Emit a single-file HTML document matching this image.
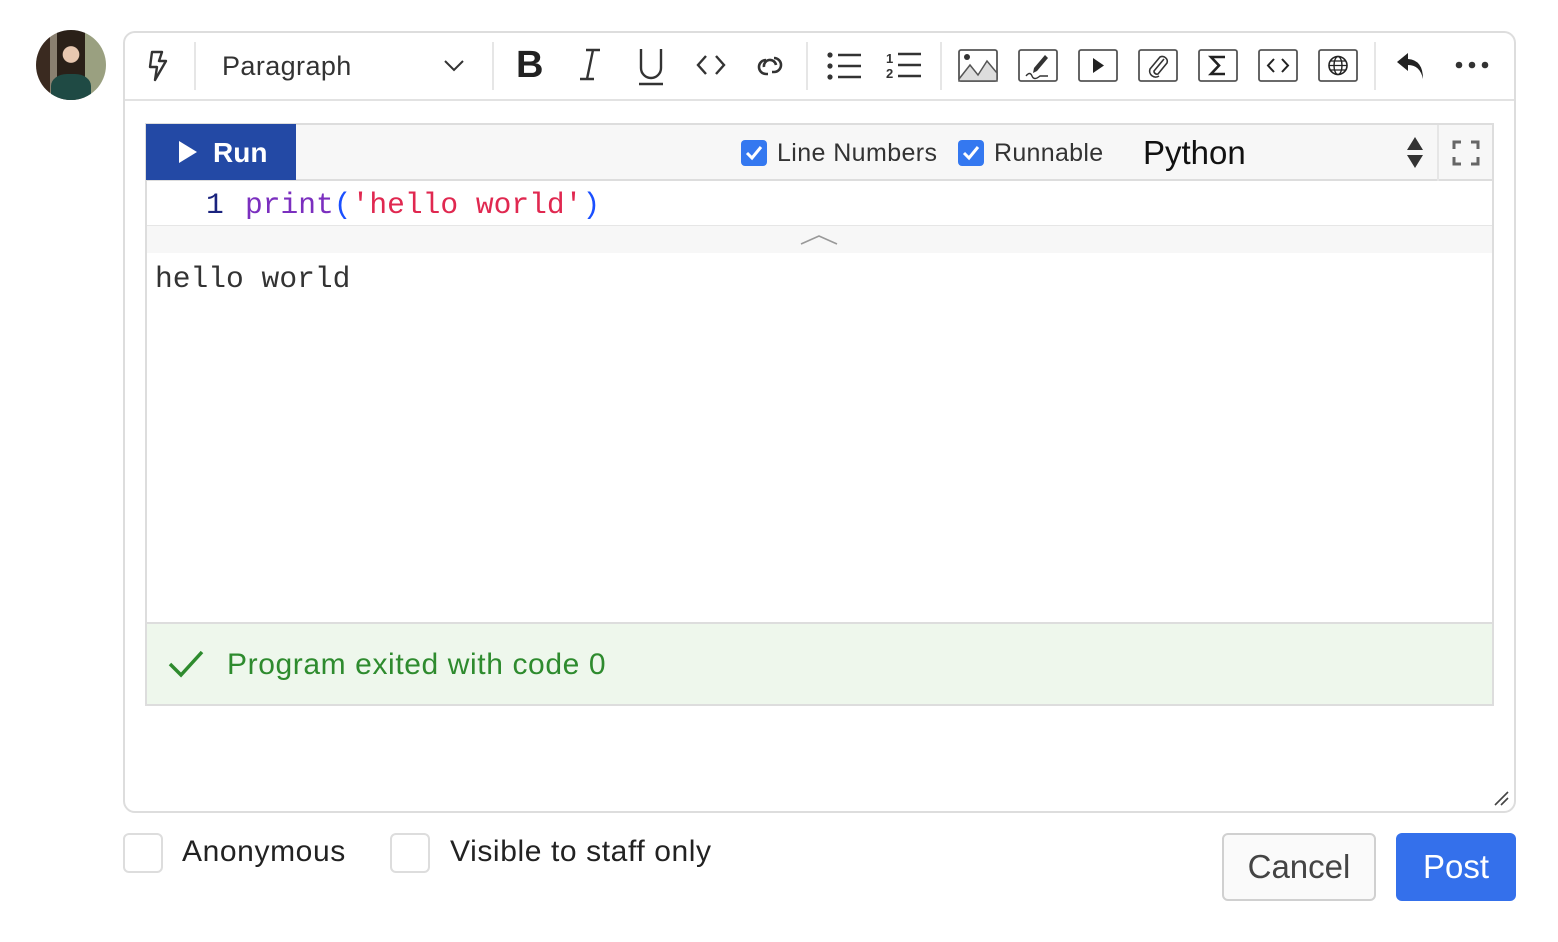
<!DOCTYPE html>
<html><head><meta charset="utf-8">
<style>
*{box-sizing:border-box;margin:0;padding:0}
body{width:1558px;height:942px;background:#fff;font-family:"Liberation Sans",sans-serif;position:relative;overflow:hidden;color:#333}
.abs{position:absolute}
.avatar{left:36px;top:30px;width:70px;height:70px;border-radius:50%;background:radial-gradient(circle at 50% 35%,#e8c8b0 0 14%,transparent 15%),linear-gradient(90deg,#3a2a20 0 20%,#8a8070 20% 30%,#2a2018 30% 70%,#9aa080 70%);overflow:hidden}
.avatar:after{content:"";position:absolute;left:15px;top:44px;width:40px;height:30px;border-radius:40% 40% 0 0;background:#1f4a44}
.editor{left:123px;top:31px;width:1393px;height:782px;border:2px solid #ddd;border-radius:12px}
.tb{left:125px;top:33px;width:1389px;height:68px;border-bottom:2px solid #e2e2e2}
.sep{top:42px;width:2px;height:48px;background:#e6e6e6}
svg{position:absolute;overflow:visible}
.cb{left:145px;top:123px;width:1349px;height:583px;border:2px solid #ddd}
.hdr{left:147px;top:125px;width:1345px;height:56px;background:#f7f7f7;border-bottom:2px solid #ddd}
.run{left:146px;top:124px;width:150px;height:56px;background:#2349a5;color:#fff;font-weight:bold;font-size:28px}
.chk{width:26px;height:26px;background:#3478f0;border-radius:4px}
.mono{font-family:"Liberation Mono",monospace;font-size:29.6px}
.box{width:40px;height:40px;border:2px solid #ddd;border-radius:6px}
</style></head><body>
<div class="abs avatar"></div>
<div class="abs editor"></div>
<div class="abs tb"></div>
<svg style="left:146px;top:50px" width="24" height="32" viewBox="0 0 24 32"><path d="M6 2 L16 2 L13 11 L20 11 L9 30 L11 17 L4 17 Z" fill="none" stroke="#333" stroke-width="2.4" stroke-linejoin="round"/></svg>
<div class="abs sep" style="left:194px"></div>
<div class="abs" style="left:222px;top:51px;font-size:27px;color:#333;letter-spacing:0.4px">Paragraph</div>
<svg style="left:444px;top:60px" width="20" height="12"><path d="M1 1 L10 10 L19 1" fill="none" stroke="#333" stroke-width="2"/></svg>
<div class="abs sep" style="left:492px"></div>
<div class="abs" style="left:516px;top:44px;font-size:38px;font-weight:bold;color:#222">B</div>
<svg style="left:578px;top:48px" width="24" height="34"><path d="M8 2 H22 M2 31 H16 M15 2 L9 31" fill="none" stroke="#333" stroke-width="2.4"/></svg>
<svg style="left:638px;top:48px" width="26" height="38"><path d="M3 1 V20 A10 10 0 0 0 23 20 V1 M1 36 H25" fill="none" stroke="#333" stroke-width="2.4"/></svg>
<svg style="left:696px;top:55px" width="30" height="20"><path d="M10 1 L2 10 L10 19 M20 1 L28 10 L20 19" fill="none" stroke="#333" stroke-width="2.4"/></svg>
<svg style="left:752px;top:54px" width="36" height="24"><path d="M14 6 A7 7 0 1 0 14 20 H16 M22 4 A7 7 0 1 1 22 18 H20 M12 13 A6 6 0 0 1 24 11" fill="none" stroke="#333" stroke-width="2.6"/></svg>
<div class="abs sep" style="left:806px"></div>
<svg style="left:826px;top:52px" width="36" height="28"><circle cx="4" cy="3" r="2.6" fill="#333"/><circle cx="4" cy="14" r="2.6" fill="#333"/><circle cx="4" cy="25" r="2.6" fill="#333"/><path d="M12 3 H35 M12 14 H35 M12 25 H35" stroke="#333" stroke-width="2.4"/></svg>
<svg style="left:886px;top:50px" width="36" height="30"><text x="0" y="13" font-size="13" font-weight="bold" fill="#333" font-family="Liberation Sans">1</text><text x="0" y="28" font-size="13" font-weight="bold" fill="#333" font-family="Liberation Sans">2</text><path d="M12 4 H35 M12 15 H35 M12 26 H35" stroke="#333" stroke-width="2.4"/></svg>
<div class="abs sep" style="left:940px"></div>
<svg style="left:958px;top:49px" width="40" height="33"><rect x="1" y="1" width="38" height="31" rx="2" fill="#fff" stroke="#555" stroke-width="1.8"/><path d="M1 30 L12 16 L20 26 L29 12 L39 24 V32 H1Z" fill="#ddd" stroke="#555" stroke-width="1.5"/><circle cx="9" cy="8" r="3" fill="#333"/></svg>
<svg style="left:1018px;top:49px" width="40" height="33"><rect x="1" y="1" width="38" height="31" rx="2" fill="#fff" stroke="#555" stroke-width="1.8"/><path d="M27 6 L30 9 L19 22 L15 24 L16 19 Z" fill="#333"/><path d="M8 27 Q12 22 14 27 T22 27 H30" fill="none" stroke="#333" stroke-width="1.4"/></svg>
<svg style="left:1078px;top:49px" width="40" height="33"><rect x="1" y="1" width="38" height="31" rx="2" fill="#fff" stroke="#555" stroke-width="1.8"/><path d="M15 9 L26 16.5 L15 24 Z" fill="#222"/></svg>
<svg style="left:1138px;top:49px" width="40" height="33"><rect x="1" y="1" width="38" height="31" rx="2" fill="#fff" stroke="#555" stroke-width="1.8"/><path d="M26 10 L16 22 A3 3 0 0 0 20 25 L29 14 A5 5 0 0 0 22 8 L12 20 A6 6 0 0 0 21 27" fill="none" stroke="#333" stroke-width="1.6"/></svg>
<svg style="left:1198px;top:49px" width="40" height="33"><rect x="1" y="1" width="38" height="31" rx="2" fill="#fff" stroke="#555" stroke-width="1.8"/><path d="M27 8 H13 L21 16.5 L13 25 H27" fill="none" stroke="#222" stroke-width="2.6"/></svg>
<svg style="left:1258px;top:49px" width="40" height="33"><rect x="1" y="1" width="38" height="31" rx="2" fill="#fff" stroke="#555" stroke-width="1.8"/><path d="M16 10 L10 16.5 L16 23 M24 10 L30 16.5 L24 23" fill="none" stroke="#222" stroke-width="2"/></svg>
<svg style="left:1318px;top:49px" width="40" height="33"><rect x="1" y="1" width="38" height="31" rx="2" fill="#fff" stroke="#555" stroke-width="1.8"/><circle cx="20" cy="16.5" r="9" fill="none" stroke="#222" stroke-width="1.6"/><ellipse cx="20" cy="16.5" rx="4" ry="9" fill="none" stroke="#222" stroke-width="1.4"/><path d="M11 16.5 H29 M12.5 12 H27.5 M12.5 21 H27.5" stroke="#222" stroke-width="1.3"/></svg>
<div class="abs sep" style="left:1374px"></div>
<svg style="left:1396px;top:52px" width="30" height="28"><path d="M12 1 L1 10 L12 19 V13 Q24 13 27 27 Q27 8 12 7 Z" fill="#222"/></svg>
<svg style="left:1455px;top:60px" width="36" height="10"><circle cx="4" cy="5" r="3.3" fill="#333"/><circle cx="17" cy="5" r="3.3" fill="#333"/><circle cx="30" cy="5" r="3.3" fill="#333"/></svg>

<div class="abs cb"></div>
<div class="abs hdr"></div>
<div class="abs run"><svg style="left:33px;top:17px" width="18" height="22"><path d="M0 0 L18 11 L0 22Z" fill="#fff"/></svg><span class="abs" style="left:67px;top:13px">Run</span></div>
<div class="abs chk" style="left:741px;top:140px"><svg style="left:4px;top:5px" width="18" height="16"><path d="M2 8 L7 13 L16 2" fill="none" stroke="#fff" stroke-width="3"/></svg></div>
<div class="abs" style="left:777px;top:139px;font-size:25px;color:#333;letter-spacing:0.4px">Line Numbers</div>
<div class="abs chk" style="left:958px;top:140px"><svg style="left:4px;top:5px" width="18" height="16"><path d="M2 8 L7 13 L16 2" fill="none" stroke="#fff" stroke-width="3"/></svg></div>
<div class="abs" style="left:994px;top:139px;font-size:25px;color:#333;letter-spacing:0.3px">Runnable</div>
<div class="abs" style="left:1143px;top:134px;font-size:33px;color:#111">Python</div>
<svg style="left:1406px;top:137px" width="18" height="32"><path d="M9 0 L17 13 H1Z M1 18 H17 L9 31Z" fill="#333"/></svg>
<div class="abs" style="left:1437px;top:125px;width:2px;height:56px;background:#e6e6e6"></div>
<svg style="left:1453px;top:141px" width="26" height="24"><path d="M1 8 V1 H8 M18 1 H25 V8 M25 16 V23 H18 M8 23 H1 V16" fill="none" stroke="#666" stroke-width="3"/></svg>
<div class="abs mono" style="left:206px;top:188px;color:#1a237e">1</div>
<div class="abs mono" style="left:245px;top:188px"><span style="color:#7b2fbf">print</span><span style="color:#1a4fff">(</span><span style="color:#e02850">'hello world'</span><span style="color:#1a4fff">)</span></div>
<div class="abs" style="left:147px;top:225px;width:1345px;height:28px;background:#f7f7f7;border-top:1px solid #e6e6e6"></div>
<svg style="left:800px;top:234px" width="38" height="12"><path d="M1 10 L19 2 L37 10" fill="none" stroke="#999" stroke-width="1.6"/></svg>
<div class="abs mono" style="left:155px;top:262px;color:#333">hello world</div>
<div class="abs" style="left:147px;top:622px;width:1345px;height:82px;background:#eef7ec;border-top:2px solid #ddd"></div>
<svg style="left:168px;top:650px" width="36" height="28"><path d="M2 14 L13 25 L34 2" fill="none" stroke="#2e8b2e" stroke-width="3.5"/></svg>
<div class="abs" style="left:227px;top:648px;font-size:30px;color:#2e8b2e;letter-spacing:0.6px">Program exited with code 0</div>
<svg style="left:1494px;top:792px" width="16" height="14"><path d="M1 13 L14 0 M7 13 L14 6" stroke="#444" stroke-width="1.6"/></svg>

<div class="abs box" style="left:123px;top:833px"></div>
<div class="abs" style="left:182px;top:835px;font-size:30px;color:#222;letter-spacing:0.6px">Anonymous</div>
<div class="abs box" style="left:390px;top:833px"></div>
<div class="abs" style="left:450px;top:835px;font-size:30px;color:#222;letter-spacing:0.6px">Visible to staff only</div>
<div class="abs" style="left:1222px;top:833px;width:154px;height:68px;border:2px solid #d0d0d0;border-radius:6px;background:#fafafa;color:#444;font-size:33px;text-align:center;line-height:64px">Cancel</div>
<div class="abs" style="left:1396px;top:833px;width:120px;height:68px;border-radius:6px;background:#3470eb;color:#fff;font-size:33px;text-align:center;line-height:68px">Post</div>
</body></html>
